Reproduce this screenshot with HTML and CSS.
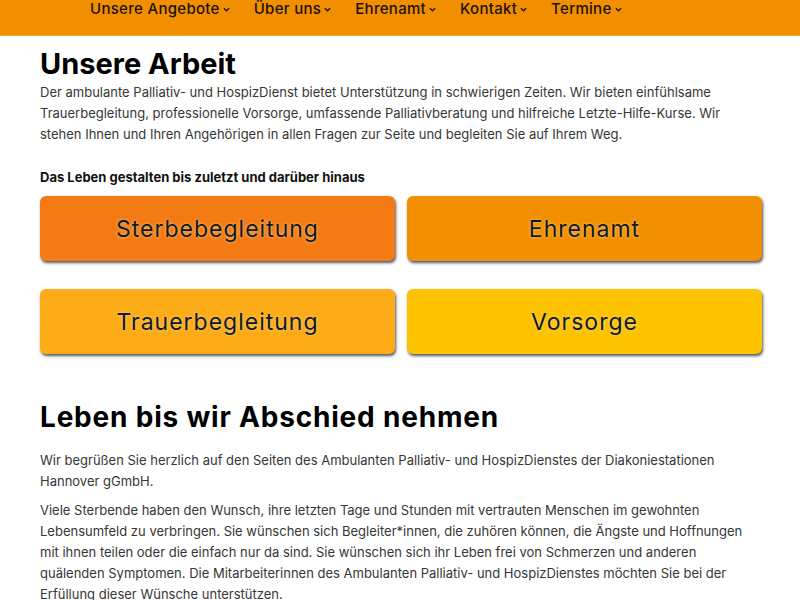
FILE: index.html
```html
<!DOCTYPE html>
<html lang="de">
<head>
<meta charset="utf-8">
<title>Unsere Arbeit</title>
<link rel="stylesheet" href="styles.css">
</head>
<body>
<header class="topbar">
  <nav class="nav">
    <a class="nav-item" href="#">Unsere Angebote<svg class="chev" viewBox="0 0 8 5"><path d="M1 1l3 3 3-3" /></svg></a>
    <a class="nav-item" href="#">Über uns<svg class="chev" viewBox="0 0 8 5"><path d="M1 1l3 3 3-3" /></svg></a>
    <a class="nav-item" href="#">Ehrenamt<svg class="chev" viewBox="0 0 8 5"><path d="M1 1l3 3 3-3" /></svg></a>
    <a class="nav-item" href="#">Kontakt<svg class="chev" viewBox="0 0 8 5"><path d="M1 1l3 3 3-3" /></svg></a>
    <a class="nav-item" href="#">Termine<svg class="chev" viewBox="0 0 8 5"><path d="M1 1l3 3 3-3" /></svg></a>
  </nav>
</header>
<main class="content">
  <h1 class="h1">Unsere Arbeit</h1>
  <p class="text">Der ambulante Palliativ- und HospizDienst bietet Unterstützung in schwierigen Zeiten. Wir bieten einfühlsame Trauerbegleitung, professionelle Vorsorge, umfassende Palliativberatung und hilfreiche Letzte-Hilfe-Kurse. Wir stehen Ihnen und Ihren Angehörigen in allen Fragen zur Seite und begleiten Sie auf Ihrem Weg.</p>
  <p class="lead">Das Leben gestalten bis zuletzt und darüber hinaus</p>
  <div class="tiles">
    <a class="tile tile-sterbe" href="#">Sterbebegleitung</a>
    <a class="tile tile-ehren" href="#">Ehrenamt</a>
    <a class="tile tile-trauer" href="#">Trauerbegleitung</a>
    <a class="tile tile-vorsorge" href="#">Vorsorge</a>
  </div>
  <h2 class="h2">Leben bis wir Abschied nehmen</h2>
  <p class="text text-first">Wir begrüßen Sie herzlich auf den Seiten des Ambulanten Palliativ- und HospizDienstes der Diakoniestationen Hannover gGmbH.</p>
  <p class="text text-next">Viele Sterbende haben den Wunsch, ihre letzten Tage und Stunden mit vertrauten Menschen im gewohnten Lebensumfeld zu verbringen. Sie wünschen sich Begleiter*innen, die zuhören können, die Ängste und Hoffnungen mit ihnen teilen oder die einfach nur da sind. Sie wünschen sich ihr Leben frei von Schmerzen und anderen quälenden Symptomen. Die Mitarbeiterinnen des Ambulanten Palliativ- und HospizDienstes möchten Sie bei der Erfüllung dieser Wünsche unterstützen.</p>
</main>
</body>
</html>
```
FILE: styles.css
```css
html, body {
  margin: 0;
  padding: 0;
  background: #ffffff;
  overflow: hidden;
}
body {
  font-family: Inter, "Liberation Sans", sans-serif;
  color: #363636;
}
.topbar {
  height: 36px;
  background: #f28f00;
  border-bottom: 1px solid #f7a530;
  box-sizing: border-box;
}
.nav {
  display: flex;
  padding-left: 90px;
  gap: 24px;
}
.nav-item {
  display: flex;
  align-items: center;
  gap: 3px;
  font-size: 15px;
  line-height: 18px;
  font-weight: 500;
  color: #1a1206;
  text-decoration: none;
  letter-spacing: 0.3px;
}
.chev {
  width: 7px;
  height: 5px;
  fill: none;
  stroke: #1a1206;
  stroke-width: 1.5;
}
.content {
  width: 722px;
  margin: 0 40px;
}
.h1 {
  margin: 10px 0 0;
  font-size: 29px;
  line-height: 36px;
  font-weight: 700;
  color: #000000;
}
.text {
  margin: 0;
  font-size: 13px;
  line-height: 21px;
}
.lead {
  margin: 22px 0 0;
  font-size: 13px;
  line-height: 21px;
  font-weight: 700;
  color: #111111;
}
.tiles {
  margin-top: 8px;
  display: grid;
  grid-template-columns: 1fr 1fr;
  column-gap: 12px;
  row-gap: 28px;
}
.tile {
  height: 65px;
  border-radius: 6px;
  display: flex;
  align-items: center;
  justify-content: center;
  font-size: 23px;
  letter-spacing: 1px;
  color: #0d1a26;
  text-decoration: none;
  box-shadow: 1px 2px 3px rgba(20, 30, 40, 0.75);
  text-shadow: 0 0 3px rgba(255, 220, 140, 0.9);
}
.tile-sterbe { background: #f47a14; }
.tile-ehren { background: #f28f00; }
.tile-trauer { background: #fdab17; }
.tile-vorsorge { background: #fdc300; }
.h2 {
  margin: 46px 0 0;
  font-size: 28px;
  line-height: 34px;
  font-weight: 700;
  letter-spacing: 0.8px;
  color: #000000;
}
.text-first {
  margin-top: 16px;
}
.text-next {
  margin-top: 8px;
}
```
